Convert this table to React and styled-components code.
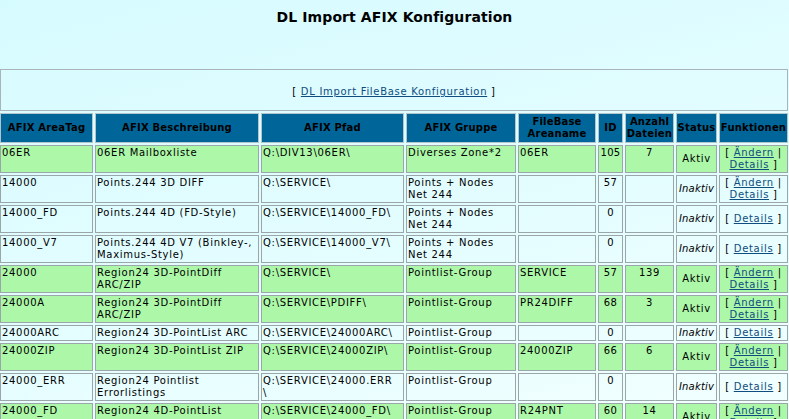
import React from 'react';
import styled, { createGlobalStyle } from 'styled-components';

const GlobalStyle = createGlobalStyle`
  html, body {
    margin: 0;
    padding: 0;
  }
  body {
    font-family: "DejaVu Sans", Verdana, sans-serif;
    font-size: 10px;
    letter-spacing: 0.7px;
    color: #000;
    background: linear-gradient(165deg, #d6fbff 0%, #e4fdff 55%, #f3ffff 100%);
    min-height: 100vh;
    overflow: hidden;
  }
`

const Page = styled.div`
  overflow: hidden;
`

const Title = styled.h1`
  margin: 0;
  height: 67px;
  padding-top: 9px;
  box-sizing: border-box;
  text-align: center;
  font-size: 14px;
  font-weight: bold;
  letter-spacing: 0.1px;
`

const Table = styled.table`
  margin-left: -2px;
  width: 792px;
  table-layout: fixed;
  border-collapse: separate;
  border-spacing: 2px;
`

const LinkCell = styled.td`
  height: 37px;
  padding: 3px 0 0;
  text-align: center;
  border: 1px solid #a8b4b8;
  vertical-align: middle;
`

const Head = styled.th`
  background: #006699;
  color: #000;
  font-weight: bold;
  font-size: 10px;
  letter-spacing: 0.2px;
  line-height: 12px;
  height: 28px;
  padding: 0;
  border: 1px solid #b4c4cc;
  text-align: center;
  vertical-align: middle;
`

const Row = styled.tr`
  background: ${p => (p.$active ? '#adf8a8' : 'transparent')};
`

const Cell = styled.td`
  border: 1px solid #9aa6a8;
  padding: 1px ${p => (p.$tight ? '0' : '1px')};
  line-height: 12px;
  vertical-align: ${p => (p.$middle ? 'middle' : 'top')};
  text-align: ${p => (p.$center ? 'center' : 'left')};
  font-style: ${p => (p.$italic ? 'italic' : 'normal')};
  letter-spacing: ${p => (p.$italic ? '0.2px' : p.$tight ? '0.3px' : '0.7px')};
  white-space: pre-line;
  overflow-wrap: anywhere;
`

const Link = styled.a`
  color: #0d4d80;
  text-decoration: underline;
  cursor: pointer;
`

const cols = [93, 164, 143, 110, 78, 25, 49, 41, 69];

const rows = [
  { tag: '06ER', desc: '06ER Mailboxliste', path: 'Q:\\DIV13\\06ER\\', group: 'Diverses Zone*2', fb: '06ER', id: 105, count: 7, active: true },
  { tag: '14000', desc: 'Points.244 3D DIFF', path: 'Q:\\SERVICE\\', group: 'Points + Nodes Net 244', fb: '', id: 57, count: '', active: false, edit: true },
  { tag: '14000_FD', desc: 'Points.244 4D (FD-Style)', path: 'Q:\\SERVICE\\14000_FD\\', group: 'Points + Nodes Net 244', fb: '', id: 0, count: '', active: false },
  { tag: '14000_V7', desc: 'Points.244 4D V7 (Binkley-, Maximus-Style)', path: 'Q:\\SERVICE\\14000_V7\\', group: 'Points + Nodes Net 244', fb: '', id: 0, count: '', active: false },
  { tag: '24000', desc: 'Region24 3D-PointDiff ARC/ZIP', path: 'Q:\\SERVICE\\', group: 'Pointlist-Group', fb: 'SERVICE', id: 57, count: 139, active: true },
  { tag: '24000A', desc: 'Region24 3D-PointDiff ARC/ZIP', path: 'Q:\\SERVICE\\PDIFF\\', group: 'Pointlist-Group', fb: 'PR24DIFF', id: 68, count: 3, active: true },
  { tag: '24000ARC', desc: 'Region24 3D-PointList ARC', path: 'Q:\\SERVICE\\24000ARC\\', group: 'Pointlist-Group', fb: '', id: 0, count: '', active: false },
  { tag: '24000ZIP', desc: 'Region24 3D-PointList ZIP', path: 'Q:\\SERVICE\\24000ZIP\\', group: 'Pointlist-Group', fb: '24000ZIP', id: 66, count: 6, active: true },
  { tag: '24000_ERR', desc: 'Region24 Pointlist Errorlistings', path: 'Q:\\SERVICE\\24000.ERR\n\\', group: 'Pointlist-Group', fb: '', id: 0, count: '', active: false },
  { tag: '24000_FD', desc: 'Region24 4D-PointList', path: 'Q:\\SERVICE\\24000_FD\\', group: 'Pointlist-Group', fb: 'R24PNT', id: 60, count: 14, active: true },
];

const Functions = ({ edit }) => (
  <>
    [ {edit && <><Link>Ändern</Link> | </>}<Link>Details</Link> ]
  </>
)

export default function App() {
  return (
    <Page>
      <GlobalStyle />
      <Title>DL Import AFIX Konfiguration</Title>
      <Table>
        <colgroup>
          {cols.map((w, i) => <col key={i} style={{ width: w }} />)}
        </colgroup>
        <tbody>
          <tr>
            <LinkCell colSpan={9}>
              [ <Link>DL Import FileBase Konfiguration</Link> ]
            </LinkCell>
          </tr>
          <tr>
            <Head>AFIX AreaTag</Head>
            <Head>AFIX Beschreibung</Head>
            <Head>AFIX Pfad</Head>
            <Head>AFIX Gruppe</Head>
            <Head>FileBase Areaname</Head>
            <Head>ID</Head>
            <Head>Anzahl Dateien</Head>
            <Head>Status</Head>
            <Head>Funktionen</Head>
          </tr>
          {rows.map(r => (
            <Row key={r.tag} $active={r.active}>
              <Cell>{r.tag}</Cell>
              <Cell>{r.desc}</Cell>
              <Cell>{r.path}</Cell>
              <Cell>{r.group}</Cell>
              <Cell>{r.fb}</Cell>
              <Cell $center $tight>{r.id}</Cell>
              <Cell $center>{r.count}</Cell>
              <Cell $center $middle $italic={!r.active}>{r.active ? 'Aktiv' : 'Inaktiv'}</Cell>
              <Cell $center $middle>
                <Functions edit={r.active || r.edit} />
              </Cell>
            </Row>
          ))}
        </tbody>
      </Table>
    </Page>
  );
}
